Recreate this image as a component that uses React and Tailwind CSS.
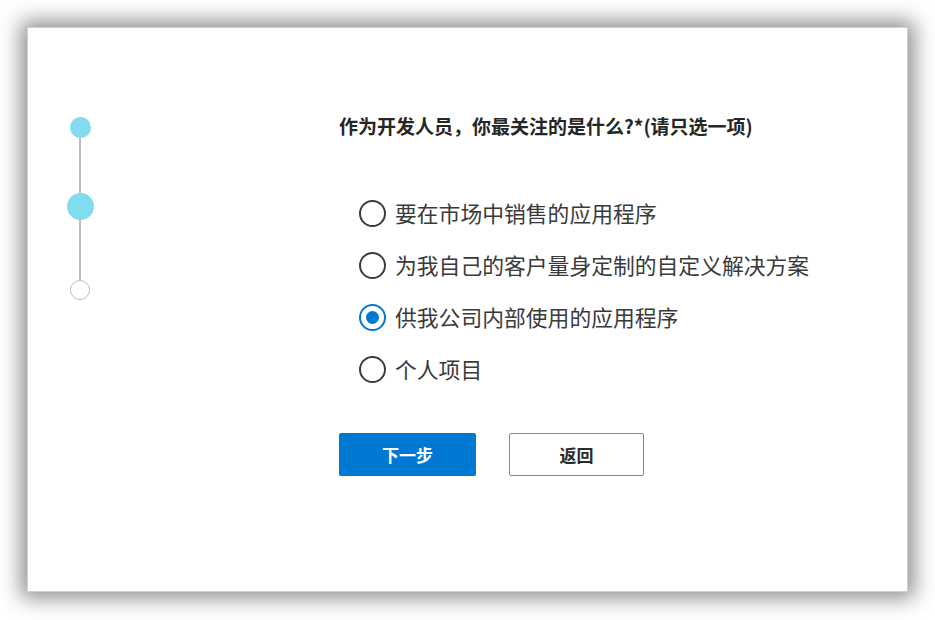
import React, { useState } from 'react';

const options = [
  '要在市场中销售的应用程序',
  '为我自己的客户量身定制的自定义解决方案',
  '供我公司内部使用的应用程序',
  '个人项目',
];

const Radio = ({ checked }) => (
  <span
    className={
      'flex h-[27px] w-[27px] shrink-0 items-center justify-center rounded-full border-2 bg-white ' +
      (checked ? 'border-[#0078d4]' : 'border-[#3c3c3c]')
    }
  >
    {checked && <span className="h-[13px] w-[13px] rounded-full bg-[#0078d4]" />}
  </span>
);

const Stepper = () => (
  <div className="flex w-[104px] flex-col items-center pt-[89px]">
    <span className="h-[21px] w-[21px] rounded-full bg-[#80dcee]" />
    <span className="h-[55px] w-[2px] bg-[#bdbdbd]" />
    <span className="h-[27px] w-[27px] rounded-full bg-[#80dcee]" />
    <span className="h-[60px] w-[2px] bg-[#bdbdbd]" />
    <span className="h-[20px] w-[20px] rounded-full border-[1.5px] border-[#bdbdbd] bg-white" />
  </div>
);

export default function App() {
  const [selected, setSelected] = useState(2);

  return (
    <div
      className="h-[620px] w-[935px] bg-white p-[27px]"
      style={{ fontFamily: '"Noto Sans CJK SC", "Noto Sans", sans-serif' }}
    >
      <div className="flex h-[565px] w-[881px] border border-[#d0d0d0] bg-white shadow-[0_0_20px_6px_rgba(0,0,0,0.45)]">
        <Stepper />

        <div className="ml-[207px] pt-[86px]">
          <h1 className="text-[19px] leading-[24px] font-bold text-[#262626]">
            作为开发人员，你最关注的是什么?*(请只选一项)
          </h1>

          <div className="mt-[49px] ml-[20px] flex flex-col">
            {options.map((label, i) => (
              <label
                key={label}
                className="flex h-[52px] cursor-pointer items-center gap-[9px]"
                onClick={() => setSelected(i)}
              >
                <Radio checked={selected === i} />
                <span className="text-[21.8px] text-[#3a3a3a]">{label}</span>
              </label>
            ))}
          </div>

          <div className="mt-[38px] flex gap-[33px]">
            <button className="h-[43px] w-[137px] rounded-[2px] bg-[#0078d4] text-[17px] font-bold text-white">
              下一步
            </button>
            <button className="h-[43px] w-[135px] rounded-[2px] border border-[#8a8a8a] bg-white text-[17px] font-bold text-[#2b2b2b]">
              返回
            </button>
          </div>
        </div>
      </div>
    </div>
  );
}
